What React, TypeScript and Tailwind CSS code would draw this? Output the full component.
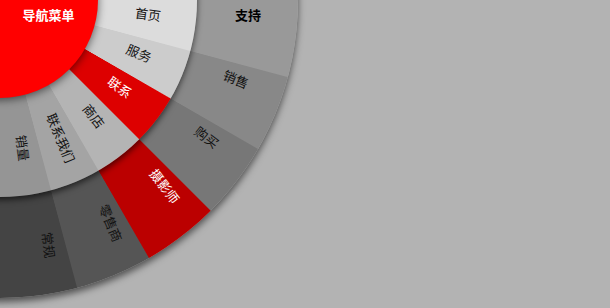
import React from "react";

type Label = { text: string; cls: string };

const innerLabels: Label[] = [
  { text: "首页", cls: "left-[147.5px] top-[14px] rotate-[7.5deg] text-[#111]" },
  { text: "服务", cls: "left-[139px] top-[52.5px] rotate-[22.5deg] text-[#111]" },
  { text: "联系", cls: "left-[119.5px] top-[86.5px] rotate-[37.5deg] text-white" },
  { text: "商店", cls: "left-[93.5px] top-[116px] rotate-[52.5deg] text-[#111]" },
  { text: "联系我们", cls: "left-[60.5px] top-[137.5px] rotate-[67.5deg] text-[#111]" },
  { text: "销量", cls: "left-[22.5px] top-[148px] rotate-[82.5deg] text-[#111]" },
];

const outerLabels: Label[] = [
  { text: "支持", cls: "left-[248px] top-[14px] font-bold text-black" },
  { text: "销售", cls: "left-[235.5px] top-[78.5px] rotate-[22.5deg] text-[#111]" },
  { text: "购买", cls: "left-[207px] top-[137px] rotate-[37.5deg] text-[#111]" },
  { text: "摄影师", cls: "left-[164.5px] top-[185.5px] rotate-[52.5deg] text-white" },
  { text: "零售商", cls: "left-[110.5px] top-[222.5px] rotate-[67.5deg] text-[#111]" },
  { text: "常规", cls: "left-[48.5px] top-[244.5px] rotate-[82.5deg] text-[#111]" },
];

function LabelSpan({ l }: { l: Label }) {
  return (
    <span
      className={
        "absolute -translate-x-1/2 -translate-y-1/2 whitespace-nowrap text-[13px] leading-none " +
        l.cls
      }
    >
      {l.text}
    </span>
  );
}

export default function App() {
  return (
    <div className="relative h-[308px] w-[610px] overflow-hidden bg-[#b3b3b3] font-['Noto_Sans_CJK_SC','Noto_Sans',sans-serif]">
      {/* outer ring */}
      <div className="absolute left-[-298px] top-[-298px] h-[596px] w-[596px] rounded-full bg-[conic-gradient(from_90deg,#999999_0deg_14.9deg,#888888_15.1deg_29.9deg,#777777_30.1deg_44.9deg,#bb0000_45.1deg_59.9deg,#555555_60.1deg_74.9deg,#444444_75.1deg_90deg,#444444_90deg_360deg)] shadow-[0_4px_7px_rgba(0,0,0,0.55)]" />
      {/* inner ring */}
      <div className="absolute left-[-197px] top-[-197px] h-[394px] w-[394px] rounded-full bg-[conic-gradient(from_90deg,#dcdcdc_0deg_14.85deg,#cccccc_15.15deg_29.85deg,#dd0000_30.15deg_44.85deg,#b4b4b4_45.15deg_59.85deg,#a4a4a4_60.15deg_74.85deg,#959595_75.15deg_90deg,#959595_90deg_360deg)] shadow-[0_3px_6px_rgba(0,0,0,0.6)]" />
      {/* center */}
      <div className="absolute left-[-98px] top-[-98px] h-[196px] w-[196px] rounded-full bg-[#ff0000] shadow-[0_2px_8px_rgba(0,0,0,0.55)]" />

      {outerLabels.map((l) => (
        <LabelSpan key={l.text} l={l} />
      ))}
      {innerLabels.map((l) => (
        <LabelSpan key={l.text} l={l} />
      ))}
      <span className="absolute left-[48.5px] top-[13.5px] -translate-x-1/2 -translate-y-1/2 whitespace-nowrap text-[13px] font-bold leading-none text-white">
        导航菜单
      </span>
    </div>
  );
}
